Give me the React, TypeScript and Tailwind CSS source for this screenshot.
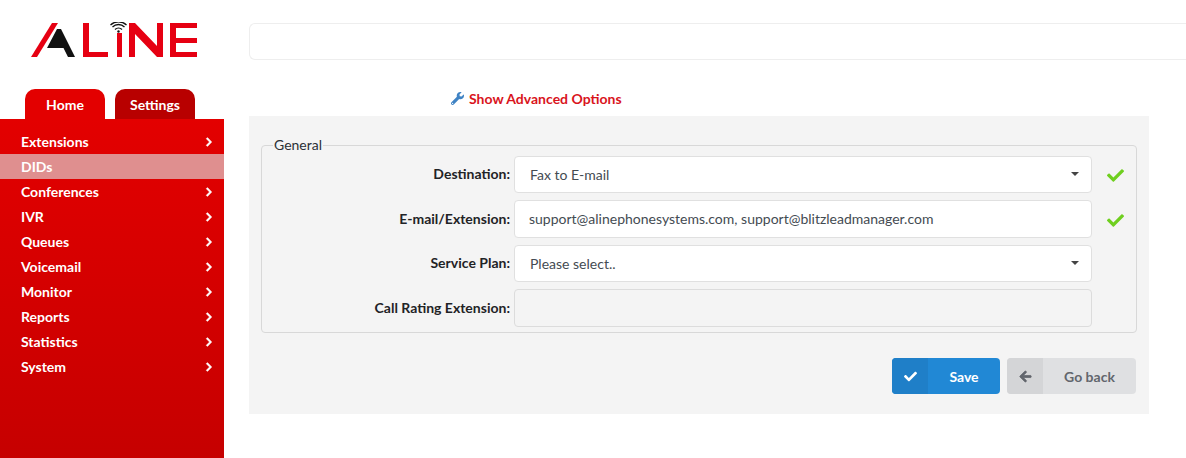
import { FaArrowLeft, FaCheck, FaChevronRight, FaWrench } from 'react-icons/fa'

const MENU = ['Extensions', 'DIDs', 'Conferences', 'IVR', 'Queues', 'Voicemail', 'Monitor', 'Reports', 'Statistics', 'System']

function Logo() {
  return (
    <svg width="170" height="38" viewBox="0 0 170 38" className="block">
      <polygon points="1,35 22,1 28,1 7,35" fill="#e60012" />
      <polygon points="27,7 31,7 45,35 38,35 33.5,26 17,26" fill="#111" />
      <path d="M53 1 h6 v29 h19 v5 h-25 z" fill="#e60012" />
      <rect x="87" y="11" width="5" height="24" fill="#e60012" />
      <path d="M85 7.5 a5 5 0 0 1 7 0 M82.5 5 a8.5 8.5 0 0 1 12 0 M80.5 3 a11.5 11.5 0 0 1 16 0" fill="none" stroke="#111" strokeWidth="1.3" />
      <circle cx="88.5" cy="9.5" r="1.2" fill="#111" />
      <polygon points="99,35 99,1 105,1 127,24 127,1 133,1 133,35 127,35 105,12 105,35" fill="#e60012" />
      <path d="M140 1 h27 v5 h-21 v10 h21 v5 h-21 v9 h21 v5 h-27 z" fill="#e60012" />
    </svg>
  )
}

function Row({ label, children, check }: { label: string; children: React.ReactNode; check?: boolean }) {
  return (
    <div className="flex items-center">
      <label className="w-[248px] shrink-0 text-right text-[14px] font-bold text-[#1f2326] pr-[4px] pb-[2px]">{label}</label>
      <div className="w-[578px] shrink-0">{children}</div>
      {check && <FaCheck className="ml-[15px] mt-[2px] text-[#6fcf1f] text-[17px]" />}
    </div>
  )
}

function Select({ value }: { value: string }) {
  return (
    <div className="h-[37px] rounded-[4px] border border-[#e0e0e0] bg-white flex items-center justify-between pl-[15px] pr-[12px] text-[14px] text-[#444b52]">
      <span>{value}</span>
      <span className="w-0 h-0 border-x-[4px] border-x-transparent border-t-[4px] border-t-[#444] mb-[2px]" />
    </div>
  )
}

export default function App() {
  return (
    <div className="flex h-[458px] w-[1186px] overflow-hidden bg-white font-['Lato','Liberation_Sans',sans-serif]">
      <aside className="w-[224px] shrink-0 flex flex-col">
        <div className="pt-[22px] pl-[30px] h-[89px]">
          <Logo />
        </div>
        <div className="flex gap-[10px] pl-[25px] h-[30px]">
          <div className="w-[80px] rounded-t-[10px] bg-[#e30000] text-white text-[14px] font-bold flex items-center justify-center">Home</div>
          <div className="w-[80px] rounded-t-[10px] bg-[#b80000] text-white text-[14px] font-bold flex items-center justify-center">Settings</div>
        </div>
        <nav className="flex-1 pt-[10px] bg-gradient-to-b from-[#e30000] to-[#c60000]">
          {MENU.map((m) => (
            <div key={m} className={`h-[25px] flex items-center justify-between pl-[21px] pr-[10px] text-white text-[14px] font-bold ${m === 'DIDs' ? 'bg-[#df8f8f]' : ''}`}>
              <span>{m}</span>
              {m !== 'DIDs' && <FaChevronRight className="text-[10px]" stroke="currentColor" strokeWidth={30} />}
            </div>
          ))}
        </nav>
      </aside>

      <main className="flex-1 pl-[25px] pt-[23px]">
        <div className="h-[37px] rounded-l-[6px] border border-r-0 border-[#eeeeee] bg-white" />
        <div className="h-[56px] pl-[202px] pt-[30px] flex items-start gap-[5px] text-[14px] font-bold text-[#d9141c] leading-[17px]">
          <FaWrench className="text-[#3f83c4] text-[13px] mt-[2px]" />
          <span>Show Advanced Options</span>
        </div>
        <div className="w-[900px] h-[298px] bg-[#f4f4f4] pt-[21px] px-[12px]">
          <fieldset className="w-[876px] h-[196px] rounded-[4px] border border-[#d8d8d8] pl-[4px] pt-[1px]">
            <legend className="ml-[7px] px-[1px] pb-[2px] text-[14px] text-[#2b3036] leading-[15px]">General</legend>
            <div className="flex flex-col gap-[7px] pt-[1px]">
              <Row label="Destination:" check>
                <Select value="Fax to E-mail" />
              </Row>
              <Row label="E-mail/Extension:" check>
                <div className="h-[38px] rounded-[4px] border border-[#e0e0e0] bg-white flex items-center pl-[14px] pb-[2px] text-[14px] text-[#444b52]">
                  support@alinephonesystems.com, support@blitzleadmanager.com
                </div>
              </Row>
              <Row label="Service Plan:">
                <Select value="Please select.." />
              </Row>
              <Row label="Call Rating Extension:">
                <div className="h-[38px] rounded-[4px] border border-[#dcdcdc] bg-[#f4f4f4]" />
              </Row>
            </div>
          </fieldset>
          <div className="flex justify-end gap-[7px] mt-[25px] pr-[1px]">
            <button type="button" className="w-[108px] h-[36px] rounded-[4px] bg-[#2188d5] flex overflow-hidden text-white text-[14px] font-bold">
              <span className="w-[36px] h-full bg-[#1f7fc8] flex items-center justify-center">
                <FaCheck className="text-[13px]" />
              </span>
              <span className="flex-1 h-full flex items-center justify-center">Save</span>
            </button>
            <button type="button" className="w-[129px] h-[36px] rounded-[4px] bg-[#dfe0e2] flex overflow-hidden text-[#62666d] text-[14px] font-bold">
              <span className="w-[36px] h-full bg-[#d4d5d7] flex items-center justify-center">
                <FaArrowLeft className="text-[13px]" stroke="currentColor" strokeWidth={30} />
              </span>
              <span className="flex-1 h-full flex items-center justify-center">Go back</span>
            </button>
          </div>
        </div>
      </main>
    </div>
  )
}
